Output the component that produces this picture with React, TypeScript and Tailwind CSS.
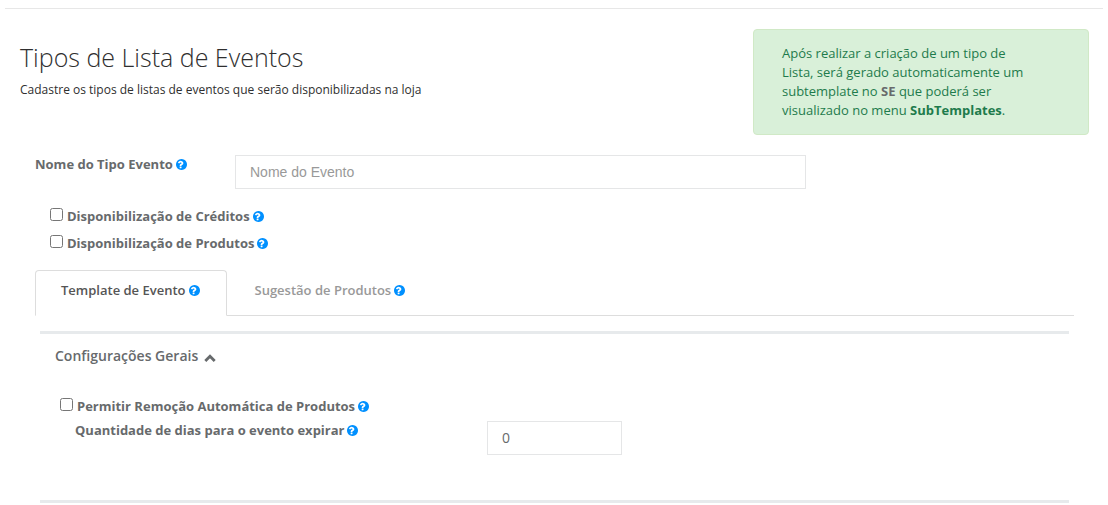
import React, { useState } from 'react';

const HelpIcon: React.FC = () => (
  <svg viewBox="128 128 1536 1536" className="h-[11px] w-[11px] shrink-0 text-[#0090ff]" fill="currentColor" aria-hidden="true">
    <path d="M896 1376v-160q0-14-9-23t-23-9h-192q-14 0-23 9t-9 23v160q0 14 9 23t23 9h192q14 0 23-9t9-23zm256-672q0-88-55.500-163t-138.500-116-170-41q-243 0-371 213-15 24 8 42l132 100q7 6 19 6 16 0 25-12 53-68 86-92 34-24 86-24 48 0 85.500 26t37.500 59q0 38-20 61t-68 45q-63 28-115.500 86.500t-52.500 125.500v36q0 14 9 23t23 9h192q14 0 23-9t9-23q0-19 21.500-49.500t54.500-49.500q32-18 49-28.500t46-35 44.500-48 28-60.500 12.500-81zm512 192q0 209-103 385.500t-279.500 279.500-385.500 103-385.500-103-279.500-279.500-103-385.500 103-385.500 279.500-279.500 385.500-103 385.500 103 279.500 279.500 103 385.500z" />
  </svg>
);

interface CheckFieldProps {
  id: string;
  label: string;
}

const CheckField: React.FC<CheckFieldProps> = ({ id, label }) => (
  <div className="flex h-[27px] items-center">
    <input id={id} type="checkbox" className="mr-1 mb-1 h-[13px] w-[13px]" />
    <label htmlFor={id} className="flex items-center gap-[3px] font-bold">
      {label} <HelpIcon />
    </label>
  </div>
);

const tabs = ['Template de Evento', 'Sugestão de Produtos'];

const App: React.FC = () => {
  const [activeTab, setActiveTab] = useState(0);
  const [open, setOpen] = useState(true);

  return (
    <div className="bg-white px-[5px] pt-2 font-['Open_Sans',sans-serif] text-[13px] leading-[19px] text-[#676a6c]">
      {/* Page heading */}
      <header className="flex items-start justify-between border-t border-[#e7e7e7] pt-5 pr-[14px] pl-[15px]">
        <div className="pt-[10px] text-[#2f2f2f]">
          <h1 className="text-[25px] leading-[36px] font-light">Tipos de Lista de Eventos</h1>
          <p className="mt-[5px] text-[12px]">
            Cadastre os tipos de listas de eventos que serão disponibilizadas na loja
          </p>
        </div>
        <div className="w-[336px] rounded-[4px] border border-[#d0e9c6] bg-[#d9f0d9] py-[14px] pr-[60px] pl-7 text-[#1e7b4c]">
          Após realizar a criação de um tipo de Lista, será gerado automaticamente um subtemplate no{' '}
          <strong className="text-[#676a6c]">SE</strong> que poderá ser visualizado no menu{' '}
          <strong>SubTemplates</strong>.
        </div>
      </header>

      <form className="mt-5 pr-[29px] pl-[30px]">
        <div className="flex items-start">
          <label htmlFor="nome" className="flex w-[200px] items-center gap-[3px] font-bold">
            Nome do Tipo Evento <HelpIcon />
          </label>
          <input
            id="nome"
            type="text"
            placeholder="Nome do Evento"
            className="h-[34px] w-[55%] border border-[#e5e6e7] px-[14px] font-['Liberation_Sans',sans-serif] text-[14px] placeholder:text-[#999999]"
          />
        </div>

        <div className="mt-[14px] pl-[15px]">
          <CheckField id="creditos" label="Disponibilização de Créditos" />
          <CheckField id="produtos" label="Disponibilização de Produtos" />
        </div>

        {/* Tabs */}
        <div role="tablist" className="mt-[13px] flex gap-[2px] border-b border-[#dddddd]">
          {tabs.map((tab, index) => (
            <button
              key={tab}
              type="button"
              role="tab"
              aria-selected={activeTab === index}
              onClick={() => setActiveTab(index)}
              className={`-mb-px flex h-[46px] items-center gap-[3px] rounded-t-[4px] border pr-[26px] pb-[5px] pl-[25px] font-semibold ${
                activeTab === index
                  ? 'border-[#dddddd] border-b-white bg-white text-[#555555]'
                  : 'border-transparent text-[#999999]'
              }`}
            >
              {tab} <HelpIcon />
            </button>
          ))}
        </div>

        {/* General settings */}
        <section className="mx-[5px] mt-[15px] border-t-3 border-b-3 border-[#e7eaec]">
          <h2 className="px-[15px] pt-3 text-[14px] leading-[20px] font-semibold">
            <button type="button" aria-expanded={open} onClick={() => setOpen(!open)} className="flex items-center gap-[6px]">
              Configurações Gerais
              <svg viewBox="0 0 12 8" className={`mt-1 h-2 w-3 ${open ? '' : 'rotate-180'}`} aria-hidden="true">
                <path d="M1.3 7 6 2.3 10.7 7" fill="none" stroke="currentColor" strokeWidth="2.8" />
              </svg>
            </button>
          </h2>
          {open && (
            <div className="mt-[27px] h-[107px] pl-5">
              <CheckField id="remocao" label="Permitir Remoção Automática de Produtos" />
              <div className="mt-px flex items-start pl-[15px]">
                <label htmlFor="dias" className="flex w-[412px] items-center gap-[3px] font-bold">
                  Quantidade de dias para o evento expirar <HelpIcon />
                </label>
                <input
                  id="dias"
                  type="text"
                  inputMode="numeric"
                  defaultValue="0"
                  className="h-[34px] w-[135px] border border-[#e5e6e7] px-[14px] pb-[2px] text-[14px]"
                />
              </div>
            </div>
          )}
        </section>
      </form>
    </div>
  );
};

export default App;
